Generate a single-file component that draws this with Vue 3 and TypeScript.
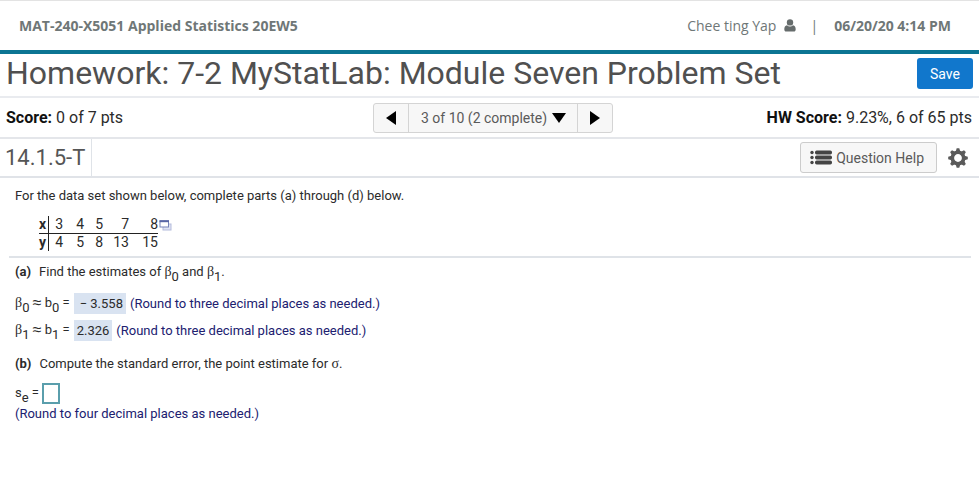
<script setup lang="ts">
import { ref } from 'vue'

interface Pair {
  x: number
  y: number
  width: string
}

const pairs: Pair[] = [
  { x: 3, y: 4, width: 'w14' },
  { x: 4, y: 5, width: 'w21' },
  { x: 5, y: 8, width: 'w19' },
  { x: 7, y: 13, width: 'w26' },
  { x: 8, y: 15, width: 'w29' },
]

const question = ref('3')
const standardError = ref('')
const teeth = [0, 45, 90, 135, 180, 225, 270, 315]
</script>

<template>
  <div class="page">
    <header class="course-bar">
      <span class="course">MAT-240-X5051 Applied Statistics 20EW5</span>
      <div class="account">
        <span class="user">Chee ting Yap</span>
        <svg class="user-icon" viewBox="0 0 12 13" aria-hidden="true">
          <circle cx="6" cy="3.4" r="3.2" />
          <path d="M3 6.2C1.2 6.6.3 8 .3 10.2c0 1.400.7 2.300 1.900 2.300h7.600c1.200 0 1.900-.9 1.900-2.300 0-2.200-.9-3.600-2.700-4C8.200 7 7.200 7.400 6 7.400S3.800 7 3 6.200z" />
        </svg>
        <span class="divider">|</span>
        <span class="time">06/20/20 4:14 PM</span>
      </div>
    </header>

    <section class="title-bar">
      <h1>Homework: 7-2 MyStatLab: Module Seven Problem Set</h1>
      <button class="save" type="button">Save</button>
    </section>

    <section class="score-bar">
      <div class="score"><b>Score:</b> 0 of 7 pts</div>
      <nav class="pager" aria-label="Questions">
        <button class="step" type="button" aria-label="Previous question">
          <svg class="arrow" viewBox="0 0 10 14" aria-hidden="true"><path d="M10 0v14L0 7z" /></svg>
        </button>
        <div class="picker">
          <select v-model="question" aria-label="Question">
            <option value="3">3 of 10 (2 complete)</option>
          </select>
          <svg class="caret" viewBox="0 0 14 10" aria-hidden="true"><path d="M0 0h14L7 10z" /></svg>
        </div>
        <button class="step" type="button" aria-label="Next question">
          <svg class="arrow" viewBox="0 0 10 14" aria-hidden="true"><path d="M0 0v14l10-7z" /></svg>
        </button>
      </nav>
      <div class="score total"><b>HW Score:</b> 9.23%, 6 of 65 pts</div>
    </section>

    <section class="question-bar">
      <h2>14.1.5-T</h2>
      <div class="tools">
        <button class="help" type="button">
          <svg class="list-icon" viewBox="0 0 22 15" aria-hidden="true">
            <circle cx="2" cy="2.500" r="1.700" /><circle cx="2" cy="7.500" r="1.700" /><circle cx="2" cy="12.500" r="1.700" />
            <rect x="5" y=".5" width="17" height="4" rx="1.700" />
            <rect x="5" y="5.500" width="17" height="4" rx="1.700" />
            <rect x="5" y="10.500" width="17" height="4" rx="1.700" />
          </svg>
          Question Help
        </button>
        <button class="settings" type="button" aria-label="Settings">
          <svg class="gear" viewBox="-10 -10 20 20" aria-hidden="true">
            <circle r="5.700" />
            <path v-for="angle in teeth" :key="angle" d="M-2.300-6.500L-1.300-9.800h2.600l1 3.300z" :transform="`rotate(${angle})`" />
          </svg>
        </button>
      </div>
    </section>

    <main>
      <div class="prompt">
        <p>For the data set shown below, complete parts (a) through (d) below.</p>
        <div class="data">
          <table>
            <tbody>
              <tr>
                <th scope="row">x</th>
                <td v-for="pair in pairs" :key="pair.x" :class="pair.width">{{ pair.x }}</td>
              </tr>
              <tr>
                <th scope="row">y</th>
                <td v-for="pair in pairs" :key="pair.x">{{ pair.y }}</td>
              </tr>
            </tbody>
          </table>
          <button class="copy" type="button" aria-label="Open data set">
            <svg viewBox="0 0 13 11" aria-hidden="true">
              <rect class="back" x="4" y="4" width="8" height="6" />
              <rect class="front" x="1" y="1" width="8.500" height="6" />
              <path class="bar" d="M.5 1.200h9.500" />
            </svg>
          </button>
        </div>
      </div>

      <div class="parts">
        <p class="part"><b>(a)</b><span>Find the estimates of <i class="greek">β</i><sub>0</sub> and <i class="greek">β</i><sub>1</sub>.</span></p>
        <div class="line first">
          <span><i class="greek">β</i><sub>0</sub> <i class="approx">≈</i> b<sub>0</sub> =</span>
          <output class="answer negative">− 3.558</output>
          <span class="hint">(Round to three decimal places as needed.)</span>
        </div>
        <div class="line">
          <span><i class="greek">β</i><sub>1</sub> <i class="approx">≈</i> b<sub>1</sub> =</span>
          <output class="answer">2.326</output>
          <span class="hint">(Round to three decimal places as needed.)</span>
        </div>
        <p class="part second"><b>(b)</b><span>Compute the standard error, the point estimate for <i class="greek">σ</i>.</span></p>
        <div class="entry">
          <label for="standard-error">s<sub>e</sub> =</label>
          <input id="standard-error" v-model="standardError" type="text" />
        </div>
        <p class="hint">(Round to four decimal places as needed.)</p>
      </div>
    </main>
  </div>
</template>

<style>
body {
  margin: 0;
  background: #fff;
}
</style>

<style scoped>
.page {
  font-family: Roboto, "Liberation Sans", sans-serif;
  font-size: 13px;
  line-height: 16px;
  color: #2b2b2b;
}
h1, h2, p {
  margin: 0;
  font-weight: 400;
}
button, select, input {
  font-family: inherit;
  margin: 0;
  box-sizing: border-box;
}
button {
  padding: 0;
  cursor: pointer;
}
svg {
  display: block;
}
.course-bar {
  display: flex;
  align-items: center;
  justify-content: space-between;
  height: 49px;
  padding: 0 28px 0 19px;
  border-top: 1px solid #e3e3e3;
  border-bottom: 4px solid #0c7593;
  font-family: "Open Sans", sans-serif;
  font-size: 14px;
  color: #6f7777;
}
.course, .time {
  font-weight: 700;
}
.account {
  display: flex;
  align-items: center;
}
.user-icon {
  width: 12px;
  height: 13px;
  margin: 0 14px 0 8px;
  fill: #666c6c;
}
.divider {
  margin-right: 16px;
}
.title-bar {
  display: flex;
  align-items: flex-start;
  justify-content: space-between;
  height: 42px;
  padding: 0 6px;
  border-bottom: 2px solid #e9ebef;
}
h1 {
  font-size: 32px;
  line-height: 38px;
  color: #505050;
}
.save {
  width: 56px;
  height: 31px;
  margin-top: 4px;
  border: 0;
  border-radius: 3px;
  background: #1177cc;
  color: #fff;
  font-size: 14px;
}
.score-bar {
  display: grid;
  grid-template-columns: 1fr auto 1fr;
  align-items: center;
  height: 39px;
  padding: 0 7px 0 6px;
  border-bottom: 2px solid #e4e6ea;
  font-size: 16px;
}
.score b {
  font-weight: 700;
  color: #111;
}
.total {
  text-align: right;
}
.pager {
  display: flex;
  margin-left: 8px;
  border: 1px solid #d4d4d4;
  border-radius: 3px;
  background: #f7f7f7;
}
.step {
  display: grid;
  place-items: center;
  width: 34px;
  height: 28px;
  border: 0;
  background: none;
}
.arrow {
  width: 10px;
  height: 14px;
}
.picker {
  display: flex;
  align-items: center;
  gap: 4px;
  padding: 0 11px 0 12px;
  border: solid #d4d4d4;
  border-width: 0 1px;
}
select {
  appearance: none;
  height: 28px;
  padding: 0;
  border: 0;
  background: none;
  font-size: 14px;
  color: #5a5a5a;
}
.caret {
  width: 14px;
  height: 10px;
  pointer-events: none;
}
.question-bar {
  display: flex;
  justify-content: space-between;
  height: 37px;
  border-bottom: 2px solid #e0e3e8;
}
h2 {
  padding: 0 6px 0 5px;
  border-right: 1px solid #dfe3e8;
  font-size: 22px;
  line-height: 37px;
  color: #555;
}
.tools {
  display: flex;
  align-items: center;
  gap: 11px;
  padding-right: 11px;
}
.help {
  display: flex;
  align-items: center;
  gap: 4px;
  height: 31px;
  padding: 0 12px 0 9px;
  border: 1px solid #ccc;
  border-radius: 3px;
  background: #f7f7f7;
  font-size: 14px;
  color: #5a5a5a;
}
.list-icon {
  width: 22px;
  height: 15px;
  fill: #444;
}
.settings {
  border: 0;
  background: none;
}
.gear {
  width: 20px;
  height: 20px;
  fill: #5a5a5a;
}
.gear circle {
  fill: none;
  stroke: #5a5a5a;
  stroke-width: 3.600;
}
main {
  padding: 10px 8px 0 9px;
}
.prompt {
  padding: 0 6px 5px;
  border-bottom: 2px solid #dfe3e8;
}
.data {
  display: flex;
  align-items: flex-start;
  padding: 12px 0 0 24px;
}
table {
  border-collapse: collapse;
  font-size: 14px;
}
th, td {
  height: 17px;
  padding: 0;
  line-height: 17px;
  text-align: right;
}
th {
  width: 8px;
  padding-right: 1px;
  border-right: 1px solid #222;
  text-align: left;
}
tr:first-child > * {
  border-bottom: 1px solid #222;
}
.w14 { min-width: 14px; }
.w21 { min-width: 21px; }
.w19 { min-width: 19px; }
.w26 { min-width: 26px; }
.w29 { min-width: 29px; }
.copy {
  margin: 4px 0 0 1px;
  border: 0;
  background: none;
}
.copy svg {
  width: 13px;
  height: 11px;
}
.back {
  fill: #dfe3f3;
  stroke: #b4bbdc;
}
.front {
  fill: #fff;
  stroke: #7783b9;
}
.bar {
  stroke: #5966a5;
  stroke-width: 2;
}
.parts {
  padding: 6px 6px 0;
}
.part {
  display: flex;
  gap: 8px;
}
.greek {
  font-family: "Liberation Serif", serif;
  font-style: normal;
  font-size: 14px;
  line-height: 1;
}
.approx {
  font-family: "Liberation Sans", sans-serif;
  font-style: normal;
  font-size: 16px;
  line-height: 1;
  vertical-align: -1px;
}
sub {
  font-size: 13px;
  line-height: 8px;
  vertical-align: -5px;
}
.line {
  display: flex;
  align-items: center;
  gap: 4px;
  height: 21px;
  margin-top: 6px;
}
.line.first {
  margin-top: 12px;
}
.answer {
  padding: 0 3px;
  background: #d9e3f1;
  line-height: 21px;
}
.negative {
  padding-left: 6px;
}
.hint {
  color: #20206f;
}
.second {
  margin-top: 15px;
}
.entry {
  display: flex;
  align-items: center;
  gap: 3px;
  margin-top: 11px;
}
input {
  width: 18px;
  height: 21px;
  padding: 0 2px;
  border: 2px solid #5a9eac;
  background: #fff;
  font-size: 13px;
}
.entry + .hint {
  margin-top: 2px;
}
</style>
